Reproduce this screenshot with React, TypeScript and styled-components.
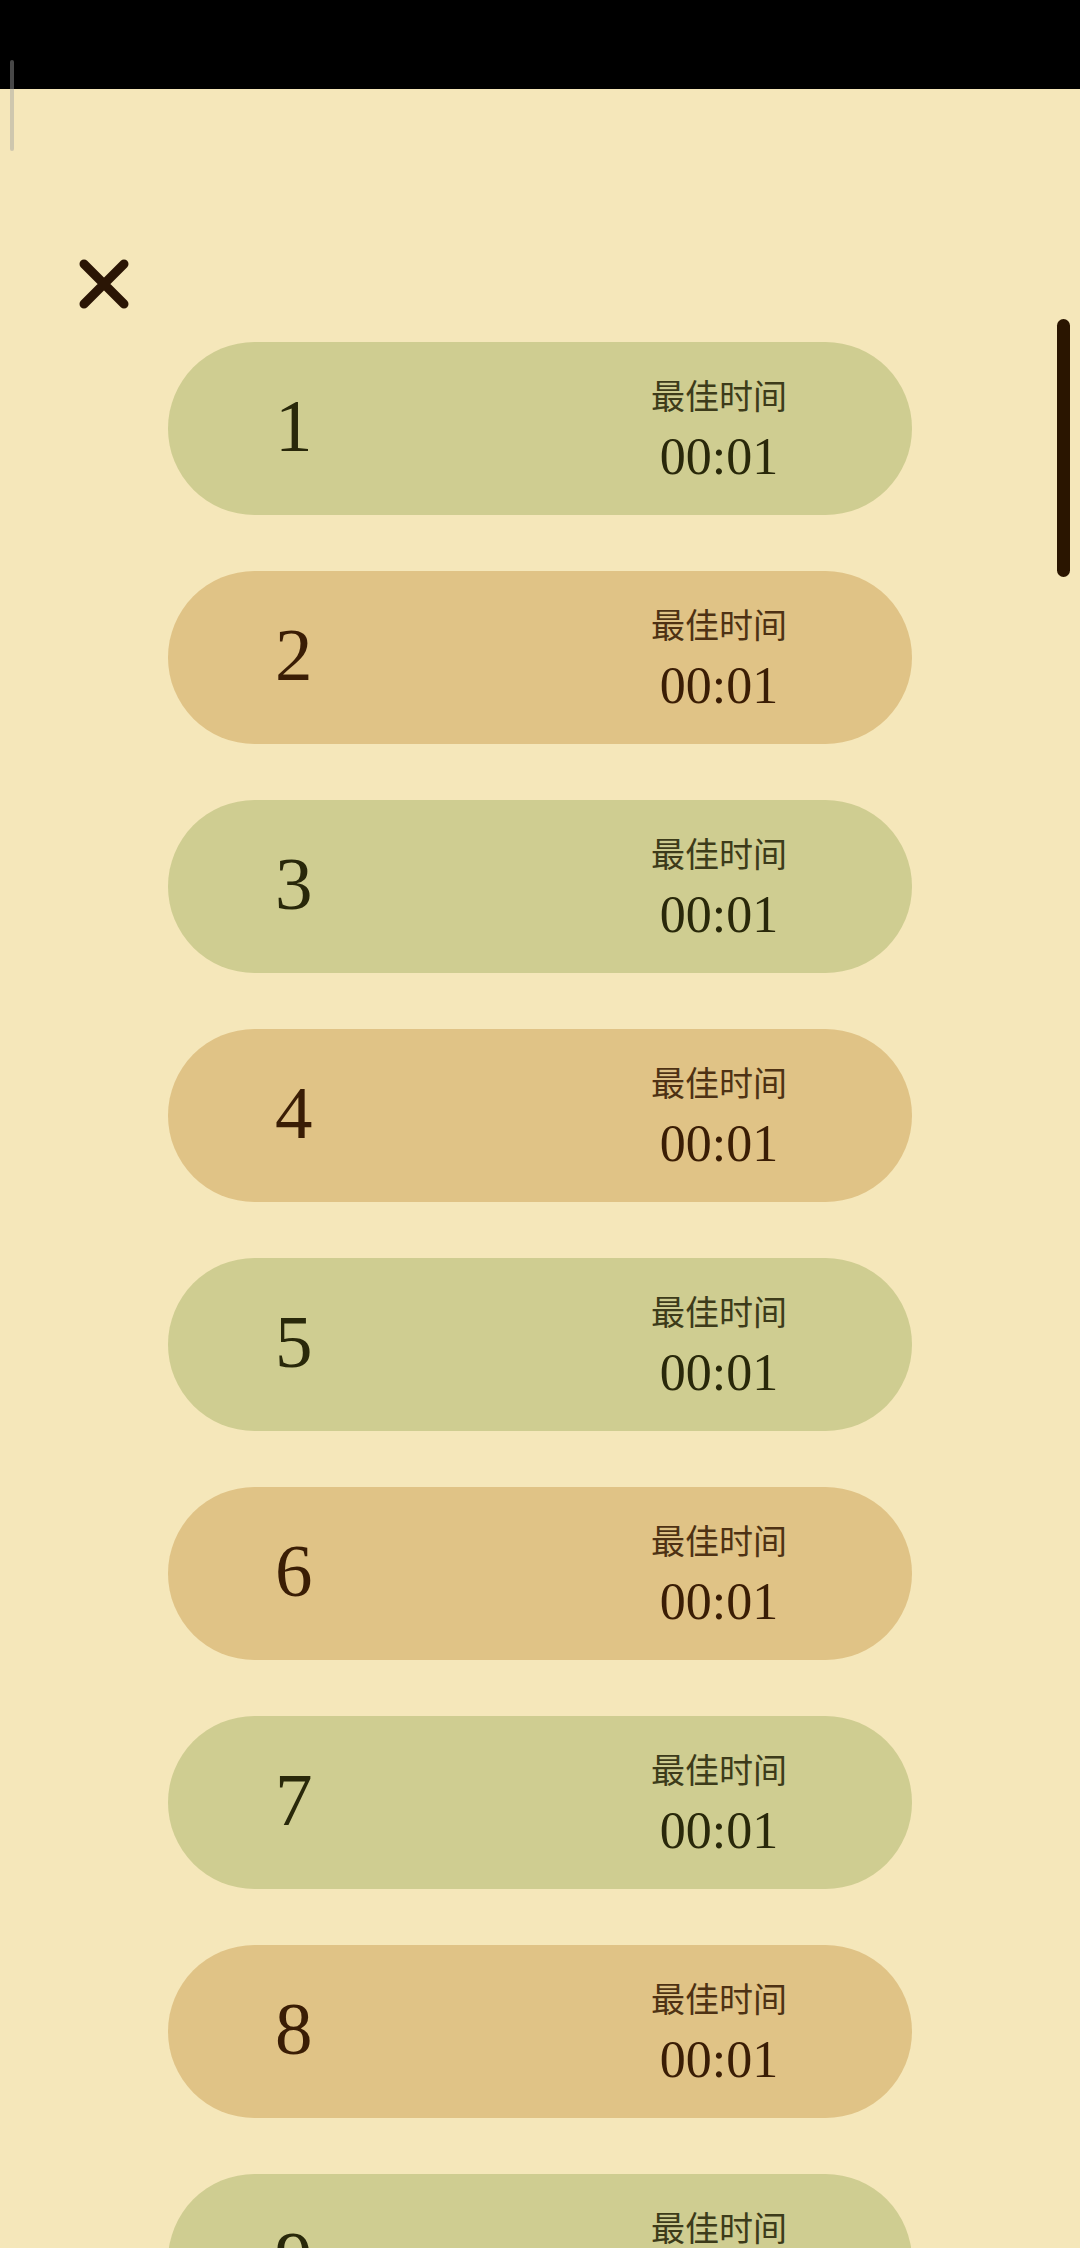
import React from 'react';
import styled, { createGlobalStyle } from 'styled-components';

const GlobalStyle = createGlobalStyle`
  * { box-sizing: border-box; }
  html, body {
    margin: 0;
    padding: 0;
    background: #f5e7ba;
  }
  body {
    width: 1080px;
    height: 2248px;
    overflow: hidden;
    font-family: "Liberation Serif", serif;
  }
`;

type Tone = 'green' | 'tan';

const palette: Record<Tone, { bg: string; ink: string }> = {
  green: { bg: '#cfcd91', ink: '#29280a' },
  tan: { bg: '#e0c386', ink: '#3a1d05' },
};

const Screen = styled.div`
  position: relative;
  width: 1080px;
  height: 2248px;
  overflow: hidden;
  background: #f5e7ba;
`;

const StatusBar = styled.div`
  height: 89px;
  background: #000;
`;

const EdgeHandle = styled.div`
  position: absolute;
  left: 10px;
  top: 60px;
  width: 4px;
  height: 91px;
  border-radius: 2px;
  background: rgba(160, 160, 160, 0.45);
`;

const Header = styled.div`
  padding: 170px 0 0 79px;
`;

const CloseButton = styled.button`
  display: block;
  width: 50px;
  height: 50px;
  padding: 0;
  border: none;
  background: none;
  cursor: pointer;
`;

const List = styled.div`
  display: flex;
  flex-direction: column;
  align-items: center;
  gap: 56px;
  padding-top: 33px;
`;

const Card = styled.div<{ $tone: Tone }>`
  flex: none;
  width: 744px;
  height: 173px;
  border-radius: 86.5px;
  background: ${(p) => palette[p.$tone].bg};
  color: ${(p) => palette[p.$tone].ink};
  display: flex;
  align-items: center;
  justify-content: space-between;
  padding: 0 125px 0 107px;
`;

const Level = styled.div`
  width: 34px;
  text-align: center;
  font-size: 75px;
  line-height: 1;
  margin-top: -6px;
`;

const Best = styled.div`
  display: flex;
  flex-direction: column;
  align-items: center;
`;

const Label = styled.div`
  font-family: "Noto Sans CJK SC", "Noto Sans", sans-serif;
  font-size: 34px;
  line-height: 42px;
  opacity: 0.88;
`;

const Time = styled.div`
  font-size: 52px;
  line-height: 52px;
  margin-top: 15px;
`;

const Scrollbar = styled.div`
  position: absolute;
  right: 10px;
  top: 319px;
  width: 13px;
  height: 258px;
  border-radius: 7px;
  background: #2a1500;
`;

const levels = Array.from({ length: 9 }, (_, i) => ({
  id: i + 1,
  best: '00:01',
}));

function CloseIcon() {
  return (
    <svg width="50" height="50" viewBox="0 0 50 50">
      <path
        d="M5 5 L45 45 M45 5 L5 45"
        stroke="#2a1505"
        strokeWidth="9"
        strokeLinecap="round"
        fill="none"
      />
    </svg>
  );
}

export default function App() {
  return (
    <Screen>
      <GlobalStyle />
      <StatusBar />
      <EdgeHandle />
      <Header>
        <CloseButton aria-label="close">
          <CloseIcon />
        </CloseButton>
      </Header>
      <List>
        {levels.map((lv) => (
          <Card key={lv.id} $tone={lv.id % 2 ? 'green' : 'tan'}>
            <Level>{lv.id}</Level>
            <Best>
              <Label>最佳时间</Label>
              <Time>{lv.best}</Time>
            </Best>
          </Card>
        ))}
      </List>
      <Scrollbar />
    </Screen>
  );
}
